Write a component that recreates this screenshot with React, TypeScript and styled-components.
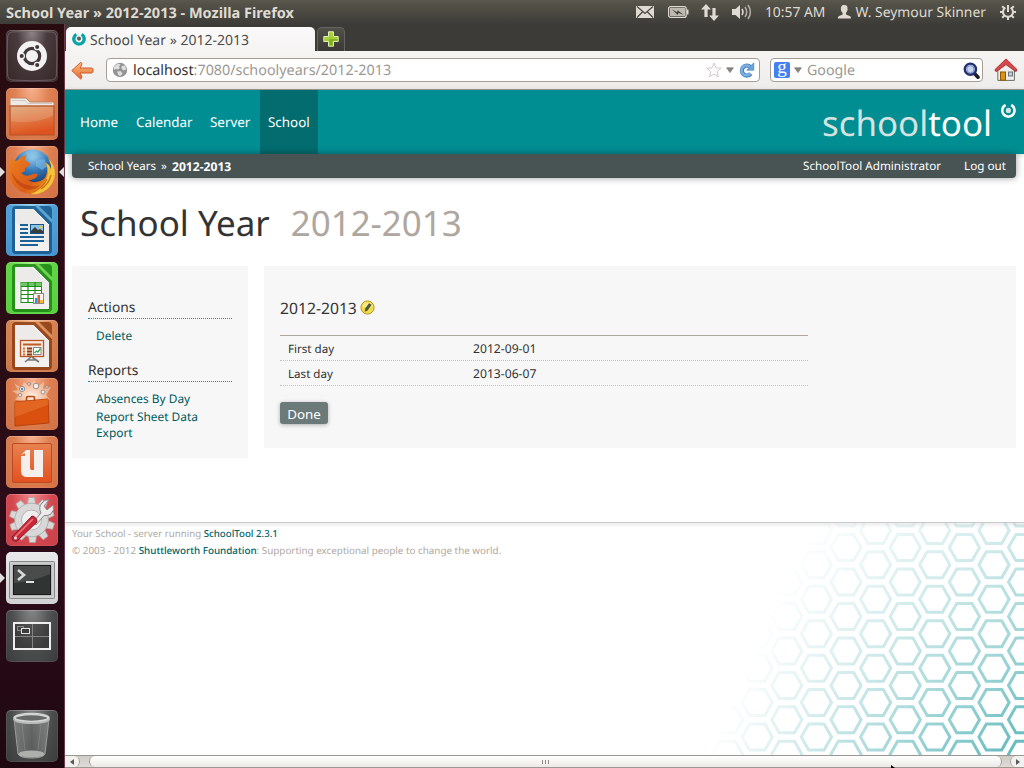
import React from "react";
import styled, { createGlobalStyle } from "styled-components";

const GlobalStyle = createGlobalStyle`
  * { box-sizing: border-box; }
  html, body { margin: 0; padding: 0; overflow: hidden; }
  body {
    font-family: "Noto Sans", "Open Sans", sans-serif;
    text-rendering: geometricPrecision;
    color: #333;
  }
  svg { display: block; flex: none; }
`;

/* ---------- desktop ---------- */

const Desktop = styled.div`
  width: 1024px;
  height: 768px;
  display: flex;
  flex-direction: column;
  overflow: hidden;
  background: #fff;
`;

const TopPanel = styled.header`
  height: 24px;
  flex: none;
  display: flex;
  align-items: center;
  padding: 0 8px 0 6px;
  background: linear-gradient(#5a574c 0, #504e45 30%, #3d3c38 100%);
  color: #dfdbd2;
`;

/* One line of text, lowered inside a vertically centred bar. */
const Label = styled.span<{ $drop: number }>`
  padding-top: ${(p) => p.$drop * 2}px;
  line-height: 20px;
  white-space: nowrap;
`;

const WindowTitle = styled.div`
  flex: 1;
  display: flex;
  font-size: 14.5px;
  font-weight: 700;
`;

const Indicators = styled.div`
  display: flex;
  align-items: center;
`;

const Indicator = styled.div<{ $gap: number }>`
  display: flex;
  align-items: center;
  gap: 3px;
  margin-right: ${(p) => p.$gap}px;
  font-size: 13.9px;
`;

const Workspace = styled.div`
  flex: 1;
  display: flex;
  min-height: 0;
`;

const Launcher = styled.nav`
  width: 65px;
  flex: none;
  display: flex;
  flex-direction: column;
  gap: 6px;
  padding: 6px 0 6px 6px;
  border-right: 1px solid #6a3c4c;
  background: linear-gradient(#290c10 0, #2a0c15 45%, #2c0b19 72%, #1f0810 100%);
`;

const LauncherItem = styled.div<{ $bg: string; $last?: boolean }>`
  position: relative;
  width: 52px;
  height: 52px;
  flex: none;
  border-radius: 5px;
  margin-top: ${(p) => (p.$last ? "auto" : "0")};
  background: ${(p) => p.$bg};
  box-shadow: inset 0 0 0 1px rgba(255, 255, 255, 0.07), inset 0 1px 0 rgba(255, 255, 255, 0.15);
`;

const Pip = styled.span<{ $side: "left" | "right" }>`
  position: absolute;
  top: 21px;
  ${(p) => (p.$side === "left" ? "left: -6px" : "right: -6px")};
  border-top: 5px solid transparent;
  border-bottom: 5px solid transparent;
  ${(p) => (p.$side === "left" ? "border-left" : "border-right")}: 5px solid #e2dddd;
`;

/* ---------- browser chrome ---------- */

const Browser = styled.main`
  flex: 1;
  min-width: 0;
  display: flex;
  flex-direction: column;
`;

const TabStrip = styled.div`
  height: 27px;
  flex: none;
  display: flex;
  align-items: flex-end;
  gap: 2px;
  padding-left: 1px;
  background: #3c3b37;
`;

const Tab = styled.div`
  width: 249px;
  height: 24px;
  display: flex;
  align-items: center;
  gap: 4px;
  padding: 0 0 1px 6px;
  border-radius: 5px 5px 0 0;
  background: linear-gradient(#fbfafa, #f5f4f3);
  color: #4c4c4c;
  font-size: 14px;
`;

const NewTab = styled.div`
  width: 28px;
  height: 24px;
  padding: 3px 0 0 5px;
  border: 1px solid #65645f;
  border-bottom: 0;
  border-radius: 5px 5px 0 0;
  background: linear-gradient(#514f49, #3a3935);
`;

const Toolbar = styled.div`
  height: 39px;
  flex: none;
  display: flex;
  align-items: center;
  padding: 0 5px 0 6px;
  border-bottom: 1px solid #a09a93;
  background: linear-gradient(#f5f4f3, #efedeb);
`;

const Field = styled.div<{ $width: number; $left: number; $pad: string; $gap: number }>`
  width: ${(p) => p.$width}px;
  height: 24px;
  flex: none;
  margin-left: ${(p) => p.$left}px;
  display: flex;
  align-items: center;
  gap: ${(p) => p.$gap}px;
  padding: ${(p) => p.$pad};
  border: 1px solid #a39d95;
  border-radius: 4px;
  background: #fff;
`;

const FieldText = styled.div<{ $size: number }>`
  flex: 1;
  display: flex;
  margin-left: 1px;
  font-size: ${(p) => p.$size}px;
  color: #9b9893;
  b { font-weight: 400; color: #333; }
`;

const HomeSlot = styled.div`
  margin-left: 11px;
`;

/* ---------- web page ---------- */

const Page = styled.div`
  flex: 1;
  display: flex;
  flex-direction: column;
  min-height: 0;
  background: #fff;
`;

const NavBar = styled.div`
  height: 64px;
  flex: none;
  display: flex;
  padding: 0 7px 0 7px;
  background: #008e93;
  box-shadow: 0 1px 5px rgba(0, 0, 0, 0.2);
`;

const NavLink = styled.a<{ $active?: boolean; $width: number }>`
  width: ${(p) => p.$width}px;
  padding-left: 8px;
  font-size: 13.4px;
  line-height: 65px;
  color: #fff;
  background: ${(p) => (p.$active ? "#026c6f" : "transparent")};
`;

const Brand = styled.div`
  margin-left: auto;
  display: flex;
  gap: 8px;
  font-size: 34.9px;
  line-height: 67px;
  color: #fff;
  span { color: #d5e2df; }
  svg { margin-top: 12px; }
`;

const Breadcrumbs = styled.div`
  position: relative;
  height: 24px;
  flex: none;
  display: flex;
  margin: 0 8px 0 7px;
  padding: 0 10px 0 16px;
  border-radius: 0 0 4px 4px;
  background: #485453;
  box-shadow: 0 0 7px rgba(0, 0, 0, 0.4);
  color: #fff;
  font-size: 11.68px;
  line-height: 26px;
  white-space: pre;
`;

const Crumb = styled.span<{ $width?: number; $bold?: boolean }>`
  width: ${(p) => (p.$width ? p.$width + "px" : "auto")};
  font-size: ${(p) => (p.$bold ? 12.1 : 11.5)}px;
  font-weight: ${(p) => (p.$bold ? 700 : 400)};
`;

const UserLinks = styled.div`
  margin-left: auto;
  display: flex;
  gap: 23px;
`;

const PageTitle = styled.h1`
  margin: 0;
  height: 88px;
  flex: none;
  display: flex;
  gap: 21px;
  padding: 23px 0 0 15px;
  font-size: 34.95px;
  line-height: 46px;
  font-weight: 400;
  color: #333;
  span { color: #aea79f; }
`;

const Columns = styled.div`
  flex: none;
  height: 256px;
  display: flex;
  align-items: flex-start;
  gap: 16px;
  padding: 0 8px 0 7px;
`;

const SidePanel = styled.aside`
  width: 176px;
  height: 192px;
  padding: 30px 16px 0;
  background: #f7f7f7;
`;

const SideHeading = styled.h3`
  margin: 0;
  height: 23px;
  border-bottom: 1px dotted #0a9ba0;
  font-size: 13.75px;
  line-height: 23px;
  font-weight: 400;
  color: #333;
`;

const SideList = styled.div<{ $height: number }>`
  height: ${(p) => p.$height}px;
  padding: 9px 8px 0;
`;

const SideLink = styled.a`
  display: block;
  margin-bottom: 2px;
  font-size: 11.9px;
  line-height: 16px;
  color: #00595c;
`;

const MainPanel = styled.section`
  flex: 1;
  height: 182px;
  padding: 32px 16px 0;
  background: #f7f7f7;
`;

const SectionHeading = styled.h2`
  margin: 0 0 16px;
  height: 21px;
  display: flex;
  align-items: flex-start;
  gap: 3px;
  font-size: 15.7px;
  line-height: 21px;
  font-weight: 400;
  color: #333;
  svg { margin-top: 2px; }
`;

const Details = styled.dl`
  width: 528px;
  margin: 0 0 16px;
  border-top: 1px solid #aea79f;
`;

const DetailRow = styled.div`
  height: 25px;
  display: grid;
  grid-template-columns: 185px 1fr;
  padding-left: 8px;
  border-bottom: 1px dotted #c4c4c4;
  font-size: 11.6px;
  line-height: 27px;
  dt, dd { margin: 0; }
  dd { font-size: 12.15px; line-height: 26px; }
`;

const DoneButton = styled.button`
  display: block;
  width: 48px;
  height: 22px;
  padding: 1px 0 0;
  border: 0;
  border-radius: 3px;
  background: #6b7979;
  box-shadow: 0 1px 4px rgba(0, 0, 0, 0.3);
  font-family: inherit;
  font-size: 13.35px;
  line-height: 22px;
  color: #fff;
`;

const Footer = styled.footer`
  flex: 1;
  min-height: 0;
  display: flex;
  justify-content: space-between;
  border-top: 1px solid #cbcbcb;
  background: linear-gradient(rgba(0, 0, 0, 0.07), rgba(0, 0, 0, 0) 5px);
`;

const FooterText = styled.div`
  padding: 3px 0 0 7px;
`;

const FooterLine = styled.div<{ $size: number }>`
  font-size: ${(p) => p.$size}px;
  line-height: 16px;
  height: 16px;
  color: #b0a8a0;
  white-space: nowrap;
  a { color: #00636a; font-weight: 500; }
`;

const ScrollBar = styled.div`
  height: 13px;
  flex: none;
  display: flex;
  border-top: 1px solid #9d9791;
  border-bottom: 1px solid #9d9791;
  background: linear-gradient(#cfccc8, #dedbd8);
`;

const ScrollButton = styled.div<{ $end?: boolean }>`
  width: ${(p) => (p.$end ? 14 : 15)}px;
  display: flex;
  align-items: center;
  padding-left: 5px;
  border: solid #aaa49d;
  border-width: ${(p) => (p.$end ? "0 0 0 1px" : "0 1px 0 0")};
  border-radius: ${(p) => (p.$end ? "6px 0 0 6px" : "0 6px 6px 0")};
  background: #f2f1f0;
`;

const ScrollTrack = styled.div`
  flex: 1;
  padding: 0 8px 0 9px;
`;

const ScrollThumb = styled.div`
  height: 11px;
  display: flex;
  align-items: center;
  justify-content: center;
  border: solid #a39d96;
  border-width: 0 1px;
  border-radius: 6px;
  background: linear-gradient(#fff, #f7f6f5 45%, #ebe9e8);
`;

const Pointer = styled.div`
  position: absolute;
  left: 891px;
  top: 765px;
`;

/* ---------- panel icons ---------- */

const MailIcon = () => (
  <svg width="18" height="12" viewBox="0 0 18 12">
    <rect width="18" height="12" fill="#dfdbd2" />
    <path d="M1 .5 9 7.5 17 .5M1 11.5 6.5 6M17 11.5 11.5 6" fill="none" stroke="#4a4841" strokeWidth="1.2" />
  </svg>
);

const BatteryIcon = () => (
  <svg width="21" height="12" viewBox="0 0 21 12">
    <rect x=".6" y=".6" width="17.6" height="10.8" rx="2" fill="none" stroke="#dfdbd2" strokeWidth="1.2" />
    <rect x="2" y="2" width="15" height="8" fill="#bdb9b0" />
    <rect x="19" y="3.5" width="1.5" height="5" fill="#dfdbd2" />
    <path d="M4 3.2 9 6.2 9.7 4.2 15.5 8.8 10.5 7 9.5 9Z" fill="#45433d" />
  </svg>
);

const NetworkIcon = () => (
  <svg width="18" height="17" viewBox="0 0 18 17" fill="#dfdbd2">
    <path d="M5 0 10 5.5H6.6V13H3.4V5.5H0Z" />
    <path d="M13 17 8.2 11.5H11.4V4H14.6V11.5H18Z" />
  </svg>
);

const VolumeIcon = () => (
  <svg width="20" height="16" viewBox="0 0 20 16">
    <path d="M0 5H3.5L8 1V15L3.5 11H0Z" fill="#dfdbd2" />
    <path d="M10 5Q12 8 10 11" fill="none" stroke="#dfdbd2" strokeWidth="1.5" />
    <path d="M13 3Q16.4 8 13 13" fill="none" stroke="#b4b0a7" strokeWidth="1.5" />
    <path d="M16 1Q20.8 8 16 15" fill="none" stroke="#b4b0a7" strokeWidth="1.5" />
  </svg>
);

const UserIcon = () => (
  <svg width="15" height="14" viewBox="0 0 15 14" fill="#dfdbd2">
    <path d="M7.2 0C10.2 0 10.8 2 10.6 4.2 10.4 6.2 9.6 7 9 7.8V9.4L13.2 11.2Q14 11.8 14 13.6H.8Q.8 11.8 1.6 11.2L5.6 9.4V7.8C4.8 7 4 6.2 3.9 4.2 3.8 2 4.4 0 7.2 0Z" />
  </svg>
);

const GearPowerIcon = () => (
  <svg width="16" height="16" viewBox="0 0 16 16" stroke="#dfdbd2" fill="none">
    <path d="M5.4 3.6A5 5 0 1 0 10.6 3.6" strokeWidth="2" />
    <path d="M8 1V8" strokeWidth="2" />
    <path d="M0 8H3M13 8H16M8 13V16M2.2 2.2 4.4 4.4M13.8 2.2 11.6 4.4M2.2 13.8 4.4 11.6M13.8 13.8 11.6 11.6" strokeWidth="2" />
  </svg>
);

/* ---------- browser icons ---------- */

const Favicon = () => (
  <svg width="14" height="14" viewBox="0 0 14 14">
    <path d="M4.4 2.4A5.2 5.2 0 1 0 9.6 2.4" fill="none" stroke="#0aa3a9" strokeWidth="3.4" />
    <circle cx="7" cy="6.6" r="2.1" fill="#5c6262" />
  </svg>
);

const PlusIcon = () => (
  <svg width="16" height="16" viewBox="0 0 16 16">
    <path d="M5.5.8H10.5V5.5H15.2V10.5H10.5V15.2H5.5V10.5H.8V5.5H5.5Z" fill="#a5cf3a" stroke="#e3f0b0" strokeWidth="1" />
    <path d="M6.2 8H14.5V9.8H9.8V14.5H6.2Z" fill="#7fb31e" />
  </svg>
);

const BackIcon = () => (
  <svg width="23" height="19" viewBox="0 0 23 19">
    <defs>
      <linearGradient id="back" x1="0" y1="0" x2="0" y2="1">
        <stop offset="0" stopColor="#f9c182" />
        <stop offset="1" stopColor="#e4682d" />
      </linearGradient>
    </defs>
    <path d="M9.8 1.2Q11.4 1.8 10.6 4L9 7H20.6Q22.2 7.2 22.2 9.5T20.6 12H9L10.6 15Q11.4 17.4 9.6 18L.8 9.6Z" fill="url(#back)" stroke="#d2582a" strokeWidth="1" />
  </svg>
);

const GlobeIcon = () => (
  <svg width="16" height="16" viewBox="0 0 16 16">
    <circle cx="8" cy="8" r="7.2" fill="#929292" />
    <path d="M2 4.5 6 1.5 8.6 2.2 7 4.4 8 6 5.8 7.6 4 7 2 8ZM9.6 4 13 3.6 14.4 7.6 11.4 8.6 9.4 6.6ZM5 9.6 8.6 9 10.6 11.4 8 14.4 6 12.6Z" fill="#dedede" />
  </svg>
);

const StarIcon = () => (
  <svg width="16" height="16" viewBox="0 0 16 16">
    <path d="M8 1 10 5.9 15.2 6.2 11.2 9.6 12.5 14.8 8 11.9 3.5 14.8 4.8 9.6.8 6.2 6 5.9Z" fill="#fff" stroke="#cfccc8" />
  </svg>
);

const CaretIcon = () => (
  <svg width="8" height="6" viewBox="0 0 8 6">
    <path d="M.6.8H7.4L4 5.6Z" fill="#8a8782" stroke="#6a6762" strokeWidth=".6" />
  </svg>
);

const ReloadIcon = () => (
  <svg width="17" height="17" viewBox="0 0 17 17">
    <path d="M12.2 4.8A5 5 0 1 0 12.8 11.6" fill="none" stroke="#4583c4" strokeWidth="4.2" />
    <path d="M12 4.8A5 5 0 1 0 12.4 11.6" fill="none" stroke="#7eb2e3" strokeWidth="2.4" />
    <path d="M15.8.8V8.2H8.6Z" fill="#6ba4dc" stroke="#3f78b8" strokeWidth=".6" />
  </svg>
);

const GoogleTile = styled.div`
  width: 16px;
  height: 16px;
  flex: none;
  border-radius: 2px;
  background: #4480f4;
  color: #fff;
  font: 19px/11px "Liberation Serif", serif;
  text-align: center;
`;

const SearchIcon = () => (
  <svg width="17" height="17" viewBox="0 0 17 17">
    <path d="M10.8 10.8 15 15.2" stroke="#1d1d22" strokeWidth="3.6" strokeLinecap="round" />
    <circle cx="7.4" cy="7.2" r="5.6" fill="#c7d3f1" stroke="#23306f" strokeWidth="2.4" />
    <circle cx="7.4" cy="7.2" r="3.6" fill="none" stroke="#7c90cc" strokeWidth="1" />
  </svg>
);

const HouseIcon = () => (
  <svg width="24" height="24" viewBox="0 0 24 24">
    <path d="M3.8 10.5 12 3.5 20.4 10.5V22.4H3.8Z" fill="#eeeeec" stroke="#6d6d68" />
    <path d="M12 .9 23 11.6Q23.2 13.6 21.4 13.4L12 6.6 2.6 13.4Q.8 13.6 1 11.6Z" fill="#d8474a" stroke="#a52a2d" strokeWidth=".9" />
    <rect x="6.5" y="14" width="5" height="8.2" fill="#d9931b" stroke="#8f5902" />
    <rect x="14.5" y="14" width="4" height="4" fill="#b9cfe6" stroke="#6f7479" />
  </svg>
);

/* ---------- page icons ---------- */

const BrandMark = () => (
  <svg width="17" height="17" viewBox="0 0 17 17">
    <path d="M5.6 3A6.2 6.2 0 1 0 11.2 3" fill="none" stroke="#fff" strokeWidth="2.6" />
    <circle cx="8.4" cy="8.4" r="2.6" fill="#d5e2df" />
  </svg>
);

const EditIcon = () => (
  <svg width="15" height="15" viewBox="0 0 15 15">
    <circle cx="7.5" cy="7.5" r="6.6" fill="#f2dc4c" stroke="#b9952b" />
    <path d="M2.2 7A5.4 5.4 0 0 1 12.8 7Z" fill="#f7ea8c" />
    <path d="M9 3.2 11.6 4.8 7.6 10.4 4.8 11.8 5 8.8Z" fill="#4d5a36" />
  </svg>
);

const hexagon = (cx: number, cy: number) =>
  `M${cx - 15.1} ${cy}L${cx - 7.7} ${cy - 13}H${cx + 7.7}L${cx + 15.1} ${cy}L${cx + 7.7} ${cy + 13}H${cx - 7.7}Z`;

const hexagons: string[] = [];
for (let col = -1; col < 11; col++) {
  for (let row = -1; row < 8; row++) {
    const shifted = col % 2 !== 0 ? 0 : 17.25;
    hexagons.push(hexagon(+(294 - 29.6 * col).toFixed(1), +(24.6 + row * 34.45 + (shifted ? -17.25 : 0)).toFixed(1)));
  }
}

const HexPattern = () => (
  <svg width="324" height="232" viewBox="0 0 324 232">
    <defs>
      <linearGradient id="across" gradientUnits="userSpaceOnUse" x1="17" y1="207" x2="278" y2="319">
        <stop offset="0" stopColor="#fff" stopOpacity="0" />
        <stop offset="1" stopColor="#fff" stopOpacity=".62" />
      </linearGradient>
      <linearGradient id="down" x1="0" y1="0" x2="0" y2="1">
        <stop offset="0" stopColor="#fff" stopOpacity=".42" />
        <stop offset="1" stopColor="#fff" />
      </linearGradient>
      <mask id="maskAcross" maskUnits="userSpaceOnUse" x="0" y="0" width="324" height="232">
        <rect width="324" height="232" fill="url(#across)" />
      </mask>
      <mask id="maskDown" maskUnits="userSpaceOnUse" x="0" y="0" width="324" height="232">
        <rect width="324" height="232" fill="url(#down)" />
      </mask>
    </defs>
    <g mask="url(#maskAcross)">
      <g mask="url(#maskDown)">
        <path d={hexagons.join("")} fill="none" stroke="#008e93" strokeWidth="3" />
      </g>
    </g>
  </svg>
);

/* ---------- launcher icons ---------- */

const DashIcon = () => (
  <svg width="52" height="52" viewBox="0 0 52 52">
    <path d="M6 2Q26 .5 46 2 50 2.500 50.300 6 51.500 26 50.300 46 50 49.500 46 50 26 51.500 6 50 2 49.500 1.700 46 .5 26 1.700 6 2 2.500 6 2Z" fill="none" stroke="#77676b" strokeWidth=".8" />
    <circle cx="26" cy="26" r="15" fill="#f3f2f2" />
    <circle cx="26" cy="26" r="7.7" fill="none" stroke="#43363a" strokeWidth="3.2" />
    <g stroke="#f3f2f2" strokeWidth="1.3" fill="#43363a">
      <circle cx="15.7" cy="26" r="2.7" />
      <circle cx="31.2" cy="17" r="2.7" />
      <circle cx="31.2" cy="35" r="2.7" />
    </g>
  </svg>
);

const FilesIcon = () => (
  <svg width="52" height="52" viewBox="0 0 52 52">
    <defs>
      <linearGradient id="folder" x1="0" y1="0" x2=".3" y2="1">
        <stop offset="0" stopColor="#d9a06c" />
        <stop offset=".5" stopColor="#e07a45" />
        <stop offset="1" stopColor="#de5420" />
      </linearGradient>
    </defs>
    <path d="M4 18V11Q4 10 5 10H20L24 14H47Q48 14 48 15V18Z" fill="#efe9e5" stroke="#c0835e" />
    <path d="M6 12.5H19L22 15.5H46" fill="none" stroke="#cfc9c5" />
    <rect x="4" y="18" width="44" height="29" fill="url(#folder)" stroke="#b0502a" />
    <path d="M5 19H47V28Q24 37 5 33Z" fill="#fff" opacity=".15" />
  </svg>
);

const FirefoxIcon = () => (
  <svg width="52" height="52" viewBox="0 0 52 52">
    <defs>
      <radialGradient id="globe" cx=".5" cy=".15" r=".8">
        <stop offset="0" stopColor="#a5d7f2" />
        <stop offset=".5" stopColor="#3379ba" />
        <stop offset="1" stopColor="#123769" />
      </radialGradient>
      <linearGradient id="fox" x1="0" y1=".2" x2="1" y2=".9">
        <stop offset="0" stopColor="#ea7c1e" />
        <stop offset=".55" stopColor="#dc5c16" />
        <stop offset="1" stopColor="#f3ae23" />
      </linearGradient>
    </defs>
    <circle cx="26.500" cy="23" r="19.500" fill="url(#globe)" />
    <path d="M20 6Q27 3 32 7L29 12 23 11ZM30 15 38 13 42 20 36 24 30 20Z" fill="#7fbce2" opacity=".6" />
    <path d="M5 12Q8 16 12 14 15 10 21 9 18 12 20 15L24 17Q24 20 19 22 20 26 15 27 20 32 27 28 30 27 32 28 30 34 22 34 30 39 38 33 43 27 40 17 44 19 45 24 46 19 42 12 49 19 49 28 48 38 40 44 33 49 25 48 12 47 6 37 0 28 5 12Z" fill="url(#fox)" />
    <path d="M42 12Q49 19 49 28 48 38 40 44 33 49 25 48 35 44 39 35 44 27 40 17 44 19 45 24 46 19 42 12Z" fill="#f3c43a" />
    <path d="M41 33Q37 42 27 46M45 29Q43 38 35 43" fill="none" stroke="#cf7017" strokeWidth="1.3" />
    <path d="M5 25Q8 39 20 43 29 45 34 39 25 42 16 37 8 32 5 25Z" fill="#b93d13" opacity=".6" />
  </svg>
);

const DocumentShape = ({ dark, light, children }: { dark: string; light: string; children: React.ReactNode }) => (
  <svg width="52" height="52" viewBox="0 0 52 52">
    <path d="M6 6Q6 2 10 2H42Q46 2 46 6V46Q46 50 42 50H10Q6 50 6 46Z" fill={dark} opacity=".85" />
    <path d="M9 5H27L43 21V47H9Z" fill="#ecebea" />
    <path d="M9 18 43 40V47H9Z" fill="#fff" opacity=".3" />
    <path d="M28 1 46 19V15L32 1Z" fill={light} opacity=".8" />
    <path d="M27 5 43 21" stroke="#fff" strokeWidth="1" />
    {children}
  </svg>
);

const WriterIcon = () => (
  <DocumentShape dark="#15568a" light="#69b3df">
    <path d="M14 21H22M14 25H22M14 29H22M14 33H38M14 37H38M14 41H32" stroke="#1c6296" strokeWidth="2" />
    <rect x="24.5" y="20.5" width="13" height="9" fill="#8dc0e2" stroke="#12568c" />
    <path d="M25 29V27L29 23 32 26 34 25 37 27V29Z" fill="#363d3c" />
    <circle cx="35" cy="23" r="1.3" fill="#efc334" />
  </DocumentShape>
);

const CalcIcon = () => (
  <DocumentShape dark="#1b8413" light="#83e45e">
    <rect x="15" y="20.5" width="20.5" height="20" fill="#fff" stroke="#1d8b16" />
    <rect x="15" y="20.5" width="20.5" height="4" fill="#72c768" />
    <path d="M22 20V40M29 20V40M15 24.5H35M15 28.5H35M15 32.5H35M15 36.5H35" stroke="#1d8b16" strokeWidth="1.2" />
    <rect x="27.5" y="31.5" width="10" height="10" fill="#f5f5f5" stroke="#888" />
    <path d="M29 41V36H31.5V41Z" fill="#2997dd" />
    <path d="M31.5 41V33H34V41Z" fill="#e4632a" />
    <path d="M34 41V38H37V41Z" fill="#eebf26" />
  </DocumentShape>
);

const ImpressIcon = () => (
  <DocumentShape dark="#8d3c10" light="#e9a26f">
    <path d="M25 37 19 42M26 37 33 42M22 40H30" stroke="#777" strokeWidth="1.6" />
    <rect x="14.5" y="20.5" width="23" height="16" fill="#f6e9df" stroke="#bb5522" strokeWidth="1.3" />
    <path d="M17 24.5H35" stroke="#c05a24" strokeWidth="2" />
    <path d="M17 28.500H19M17 31.500H19M17 34.500H19" stroke="#d5703a" strokeWidth="1.800" />
    <path d="M21 28.500H26M21 31.500H26M21 34.500H26" stroke="#8c3d12" strokeWidth="1.800" />
    <rect x="27.5" y="27.5" width="7.5" height="7" fill="#fff" stroke="#888" />
    <path d="M28.5 33 30.5 31 32 32 34.5 28.5" stroke="#33a04b" fill="none" strokeWidth="1.3" />
  </DocumentShape>
);

const SoftwareIcon = () => (
  <svg width="52" height="52" viewBox="0 0 52 52">
    <defs>
      <radialGradient id="glow">
        <stop offset="0" stopColor="#fff6ee" stopOpacity=".95" />
        <stop offset="1" stopColor="#ffd9bf" stopOpacity="0" />
      </radialGradient>
    </defs>
    <path d="M8 5 15 10 18 4 24 9 28 2 31 9 38 4 37 11 45 9 40 17 44 22H9L13 17 6 13 12 12Z" fill="#ffe2ce" opacity=".5" />
    <ellipse cx="26" cy="18" rx="17" ry="12" fill="url(#glow)" />
    <g fill="#f4eeea" stroke="#9b8d88" strokeWidth="1">
      <circle cx="16" cy="11" r="2.600" />
      <circle cx="30" cy="8" r="2.800" />
      <circle cx="37" cy="14" r="2" />
      <circle cx="23" cy="6" r="1.400" />
      <circle cx="14" cy="17" r="1.600" />
      <circle cx="41" cy="9" r="1.3" />
    </g>
    <circle cx="16" cy="11" r="1.200" fill="#4b8cc0" />
    <path d="M9 24 42 21 43 45 9 48Z" fill="#d9500f" stroke="#b8400c" />
    <path d="M9 24 42 21V27L9 39Z" fill="#ee7a35" opacity=".5" />
    <path d="M20.500 23V20Q20.500 18.500 22 18.500H27Q28.500 18.500 28.500 20V23" fill="none" stroke="#b8480f" strokeWidth="1.600" />
  </svg>
);

const UbuntuOneIcon = () => (
  <svg width="52" height="52" viewBox="0 0 52 52">
    <defs>
      <linearGradient id="one" x1="0" y1="0" x2="0" y2="1">
        <stop offset="0" stopColor="#e78250" />
        <stop offset="1" stopColor="#e4501f" />
      </linearGradient>
    </defs>
    <rect x="6.5" y="7.5" width="39" height="39" rx="1.5" fill="url(#one)" stroke="#bb4a25" />
    <path d="M15 19 20 14H24V32Q24 34 26 34H28V14H37V41H21Q15 41 15 35V20H19V17Z" fill="#f4efed" />
  </svg>
);

const gearTeeth = Array.from({ length: 10 }, (_, i) => i * 36);

const SettingsIcon = () => (
  <svg width="52" height="52" viewBox="0 0 52 52">
    <g fill="#d9d8d8" stroke="#a9a3a3" strokeWidth=".7">
      {gearTeeth.map((angle) => (
        <path key={angle} d="M22 10 23 3.5H29L30 10Z" transform={`rotate(${angle} 26 26) translate(-.5 0)`} />
      ))}
      <circle cx="25.5" cy="26" r="16.8" />
    </g>
    <circle cx="25.5" cy="26" r="10" fill="#eee" stroke="#bbb4b4" />
    <path d="M27 28 35 19Q32 13 36 9 39 5 43 6L38 12 41 16 47 11Q49 16 45 20 42 22 38 21.5L30 31Z" fill="#ececec" stroke="#8c8787" />
    <path d="M6 43 26 22Q31 23 31 28L11 47Q6 48 6 43Z" fill="#cc2637" stroke="#8d1c29" />
    <path d="M9 43 27 25" stroke="#e77b84" strokeWidth="1.6" />
    <circle cx="9.5" cy="44" r="1.6" fill="#f1d7da" />
  </svg>
);

const TerminalIcon = () => (
  <svg width="52" height="52" viewBox="0 0 52 52">
    <rect x="3.5" y="9.5" width="45" height="37" rx="1" fill="#b9b9b9" stroke="#888" />
    <rect x="5" y="11" width="42" height="34" fill="none" stroke="#dedede" />
    <rect x="7.5" y="13.5" width="37" height="29" fill="#303433" stroke="#191b1b" />
    <path d="M8 14H44V22Q25 30 8 31Z" fill="#fff" opacity=".12" />
    <path d="M12 18 18 23 12 28" fill="none" stroke="#d7dad8" strokeWidth="2.6" />
    <path d="M20 30H28" stroke="#e2e4e2" strokeWidth="2" />
  </svg>
);

const WorkspacesIcon = () => (
  <svg width="52" height="52" viewBox="0 0 52 52" fill="none">
    <rect x="8" y="13" width="36" height="26" fill="#2b2b2b" fillOpacity=".45" stroke="#eee" strokeWidth="2" />
    <path d="M26.5 14V38M9 26.5H43" stroke="#858585" strokeWidth="1" />
    <rect x="11.5" y="16.5" width="6" height="4" stroke="#8a8a8a" />
    <rect x="15.5" y="18.5" width="8" height="5" stroke="#e0e0e0" fill="#3d3d3d" />
  </svg>
);

const TrashIcon = () => (
  <svg width="52" height="52" viewBox="0 0 52 52">
    <defs>
      <linearGradient id="bin" x1="0" y1="0" x2="1" y2="0">
        <stop offset="0" stopColor="#8a8c8b" stopOpacity=".75" />
        <stop offset=".5" stopColor="#606261" stopOpacity=".7" />
        <stop offset="1" stopColor="#8a8c8b" stopOpacity=".75" />
      </linearGradient>
    </defs>
    <path d="M8 9 12 44Q14 48 25.5 48T39 44L43 9Z" fill="url(#bin)" stroke="#9a9c9b" />
    <ellipse cx="25.5" cy="44" rx="13" ry="3.6" fill="#aeb0ae" />
    <path d="M16 14 19 40M35 14 32 40" stroke="#999b9a" strokeWidth=".7" opacity=".6" />
    <ellipse cx="25.5" cy="8" rx="17" ry="4" fill="#686a69" stroke="#d3d4d3" strokeWidth="2.6" />
    <path d="M8 9Q9 13 25.5 13T43 9" fill="none" stroke="#b8bab9" strokeWidth="2" />
  </svg>
);

const orangeTile = "radial-gradient(ellipse at 50% -5%, #f8b390 0, #df8052 48%, #d07043 100%)";
const darkTile = "radial-gradient(ellipse at 50% -10%, #8c8c8c 0, #4c4d4d 55%, #3a3b3b 100%)";

type LauncherApp = { id: string; bg: string; icon: React.ReactNode; pips?: ("left" | "right")[]; last?: boolean };

const apps: LauncherApp[] = [
  { id: "dash", bg: "radial-gradient(ellipse at 50% 0, #92878a 0, #4a3b3f 40%, #35262a 100%)", icon: <DashIcon /> },
  { id: "files", bg: orangeTile, icon: <FilesIcon /> },
  { id: "firefox", bg: orangeTile, icon: <FirefoxIcon />, pips: ["left", "right"] },
  { id: "writer", bg: "radial-gradient(ellipse at 50% 0, #8dcbee 0, #4fa0d8 60%, #4391cc 100%)", icon: <WriterIcon /> },
  { id: "calc", bg: "radial-gradient(ellipse at 50% 0, #a2f480 0, #5fd643 60%, #56cf3c 100%)", icon: <CalcIcon /> },
  { id: "impress", bg: "radial-gradient(ellipse at 50% 0, #f3b488 0, #d68252 60%, #cc7545 100%)", icon: <ImpressIcon /> },
  { id: "software", bg: orangeTile, icon: <SoftwareIcon /> },
  { id: "one", bg: orangeTile, icon: <UbuntuOneIcon /> },
  { id: "settings", bg: "radial-gradient(ellipse at 50% 0, #f0888c 0, #d4474e 55%, #c94049 100%)", icon: <SettingsIcon /> },
  { id: "terminal", bg: "linear-gradient(#e9e9e9, #d2d2d2)", icon: <TerminalIcon />, pips: ["left"] },
  { id: "workspaces", bg: darkTile, icon: <WorkspacesIcon /> },
  { id: "trash", bg: darkTile, icon: <TrashIcon />, last: true },
];

const dates = [
  { label: "First day", value: "2012-09-01" },
  { label: "Last day", value: "2013-06-07" },
];

export default function App() {
  return (
    <Desktop>
      <GlobalStyle />
      <TopPanel>
        <WindowTitle><Label $drop={1}>School Year » 2012-2013 - Mozilla Firefox</Label></WindowTitle>
        <Indicators>
          <Indicator $gap={14}><MailIcon /></Indicator>
          <Indicator $gap={12}><BatteryIcon /></Indicator>
          <Indicator $gap={13}><NetworkIcon /></Indicator>
          <Indicator $gap={13}><VolumeIcon /></Indicator>
          <Indicator $gap={12}><Label $drop={1}>10:57 AM</Label></Indicator>
          <Indicator $gap={14}><UserIcon /><Label $drop={1}>W. Seymour Skinner</Label></Indicator>
          <GearPowerIcon />
        </Indicators>
      </TopPanel>
      <Workspace>
        <Launcher>
          {apps.map((app) => (
            <LauncherItem key={app.id} $bg={app.bg} $last={app.last}>
              {app.icon}
              {app.pips?.map((side) => <Pip key={side} $side={side} />)}
            </LauncherItem>
          ))}
        </Launcher>
        <Browser>
          <TabStrip>
            <Tab><Favicon /><Label $drop={2}>School Year » 2012-2013</Label></Tab>
            <NewTab><PlusIcon /></NewTab>
          </TabStrip>
          <Toolbar>
            <BackIcon />
            <Field $width={654} $left={12} $pad="0 4px 0 5px" $gap={4}>
              <GlobeIcon />
              <FieldText $size={14.35}><Label $drop={1}><b>localhost</b>:7080/schoolyears/2012-2013</Label></FieldText>
              <StarIcon />
              <CaretIcon />
              <ReloadIcon />
            </Field>
            <Field $width={213} $left={10} $pad="0 2px 0 3px" $gap={4}>
              <GoogleTile>g</GoogleTile>
              <CaretIcon />
              <FieldText $size={14.2}><Label $drop={1}>Google</Label></FieldText>
              <SearchIcon />
            </Field>
            <HomeSlot><HouseIcon /></HomeSlot>
          </Toolbar>
          <Page>
            <NavBar>
              <NavLink $width={56}>Home</NavLink>
              <NavLink $width={74}>Calendar</NavLink>
              <NavLink $width={58}>Server</NavLink>
              <NavLink $width={58} $active>School</NavLink>
              <Brand>
                <div><span>school</span>tool</div>
                <BrandMark />
              </Brand>
            </NavBar>
            <Breadcrumbs>
              <Crumb $width={73}>School Years</Crumb>
              <Crumb $width={11}>»</Crumb>
              <Crumb $bold>2012-2013</Crumb>
              <UserLinks>
                <span>SchoolTool Administrator</span>
                <span>Log out</span>
              </UserLinks>
            </Breadcrumbs>
            <PageTitle>School Year <span>2012-2013</span></PageTitle>
            <Columns>
              <SidePanel>
                <SideHeading>Actions</SideHeading>
                <SideList $height={40}>
                  <SideLink>Delete</SideLink>
                </SideList>
                <SideHeading>Reports</SideHeading>
                <SideList $height={70}>
                  <SideLink>Absences By Day</SideLink>
                  <SideLink>Report Sheet Data Export</SideLink>
                </SideList>
              </SidePanel>
              <MainPanel>
                <SectionHeading>2012-2013<EditIcon /></SectionHeading>
                <Details>
                  {dates.map((d) => (
                    <DetailRow key={d.label}>
                      <dt>{d.label}</dt>
                      <dd>{d.value}</dd>
                    </DetailRow>
                  ))}
                </Details>
                <DoneButton>Done</DoneButton>
              </MainPanel>
            </Columns>
            <Footer>
              <FooterText>
                <FooterLine $size={9.7}>Your School - server running <a>SchoolTool 2.3.1</a></FooterLine>
                <FooterLine $size={9.85}>© 2003 - 2012 <a>Shuttleworth Foundation</a>: Supporting exceptional people to change the world.</FooterLine>
              </FooterText>
              <HexPattern />
            </Footer>
          </Page>
          <ScrollBar>
            <ScrollButton>
              <svg width="4" height="6" viewBox="0 0 4 6"><path d="M4 0V6L0 3Z" fill="#5c5a56" /></svg>
            </ScrollButton>
            <ScrollTrack>
              <ScrollThumb>
                <svg width="8" height="4" viewBox="0 0 8 4"><path d="M.5 0V4M3.5 0V4M6.5 0V4" stroke="#8f8b86" /></svg>
              </ScrollThumb>
            </ScrollTrack>
            <ScrollButton $end>
              <svg width="4" height="6" viewBox="0 0 4 6"><path d="M0 0V6L4 3Z" fill="#5c5a56" /></svg>
            </ScrollButton>
          </ScrollBar>
        </Browser>
      </Workspace>
      <Pointer>
        <svg width="4" height="3" viewBox="0 0 4 3"><path d="M0 0 4 3H0Z" fill="#000" /></svg>
      </Pointer>
    </Desktop>
  );
}
